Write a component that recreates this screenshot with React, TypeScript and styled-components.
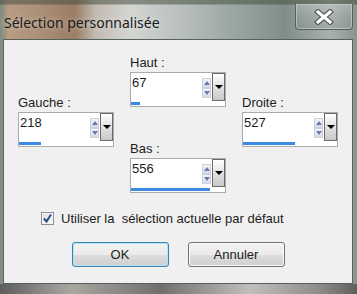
import React from 'react'
import styled, { createGlobalStyle } from 'styled-components'

const GlobalStyle = createGlobalStyle`
	html, body {
		margin: 0;
		padding: 0;
		width: 357px;
		height: 294px;
		overflow: hidden;
	}
	body {
		font-family: "Liberation Sans", Arial, sans-serif;
	}
`

type Field = {
	label: string
	value: number
	bar: number
}

const fields: Record<string, Field> = {
	gauche: { label: 'Gauche :', value: 218, bar: 22 },
	haut: { label: 'Haut :', value: 67, bar: 9 },
	droite: { label: 'Droite :', value: 527, bar: 52 },
	bas: { label: 'Bas :', value: 556, bar: 79 },
}

const SpinField = ({ field, offset }: { field: Field; offset?: boolean }) => (
	<FieldGroup $offset={offset}>
		<FieldLabel>{field.label}</FieldLabel>
		<SpinBox>
			<SpinValue>{field.value}</SpinValue>
			<Spinner>
				<SpinArrow $dir="up" />
				<SpinArrow $dir="down" />
			</Spinner>
			<DropButton>
				<DropTriangle />
			</DropButton>
			<BarTrack>
				<Bar style={{ width: field.bar }} />
			</BarTrack>
		</SpinBox>
	</FieldGroup>
)

const App = () => {
	return (
		<>
			<GlobalStyle />
			<Window>
				<TitleBar>
					<Title>Sélection personnalisée</Title>
					<CloseButton>
						<svg width="20" height="16" viewBox="0 0 20 16">
							<path d="M4 3 L16 13 M16 3 L4 13" stroke="#4b5552" strokeWidth="5.5" strokeLinecap="square" fill="none" />
							<path d="M4 3 L16 13 M16 3 L4 13" stroke="#ffffff" strokeWidth="3.2" strokeLinecap="square" fill="none" />
						</svg>
					</CloseButton>
				</TitleBar>
				<Client>
					<FieldsGrid>
						<SpinField field={fields.gauche} offset />
						<MiddleColumn>
							<SpinField field={fields.haut} />
							<SpinField field={fields.bas} />
						</MiddleColumn>
						<SpinField field={fields.droite} offset />
					</FieldsGrid>
					<CheckRow>
						<CheckBox>
							<svg width="11" height="11" viewBox="0 0 11 11">
								<path d="M2 5.5 L4.5 8.5 L9 1.5" stroke="#2a4b8d" strokeWidth="2" fill="none" />
							</svg>
						</CheckBox>
						<CheckLabel>Utiliser la  sélection actuelle par défaut</CheckLabel>
					</CheckRow>
					<ButtonRow>
						<DialogButton $primary>OK</DialogButton>
						<DialogButton>Annuler</DialogButton>
					</ButtonRow>
				</Client>
			</Window>
		</>
	)
}

const Window = styled.div`
	width: 357px;
	height: 294px;
	box-sizing: border-box;
	display: flex;
	flex-direction: column;
	padding: 0 4px 0 3px;
	background:
		linear-gradient(to bottom, rgba(70, 80, 65, 0.55) 0, rgba(70, 80, 65, 0.55) 4px, transparent 5px),
		linear-gradient(to right, #5e5e5e 0, #a7a7a2 20%, #6f706c 45%, #bfbfbb 70%, #8a8a86 90%, #5f5f5c 100%) bottom / 100% 10px no-repeat,
		linear-gradient(to right, #7d8d80 0, #8e9080 3px, #b79c82 8px, #ab8f77 40px, #9a7c63 75px, #c2bab0 95px, #d4d6d2 130px, #bcc2bf 175px, #9ca8a4 230px, #808e8a 285px, #a8b1ac 330px, #8a948e 357px);
`

const TitleBar = styled.div`
	height: 39px;
	display: flex;
	justify-content: space-between;
	align-items: flex-start;
`

const Title = styled.div`
	font-family: "Noto Sans", "Open Sans", sans-serif;
	font-size: 14px;
	line-height: 20px;
	color: #1a1a1a;
	padding: 13px 0 0 1px;
	text-shadow: 0 0 6px rgba(255, 255, 255, 0.5);
`

const CloseButton = styled.div`
	margin-top: 4px;
	width: 58px;
	height: 26px;
	box-sizing: border-box;
	display: flex;
	align-items: center;
	justify-content: center;
	border: 1px solid #56605b;
	border-top: none;
	border-radius: 0 0 4px 4px;
	box-shadow: inset 0 0 0 1px rgba(255, 255, 255, 0.35);
	background: linear-gradient(to bottom, rgba(255, 255, 255, 0.2), rgba(255, 255, 255, 0.05) 50%, rgba(0, 0, 0, 0.04));
`

const Client = styled.div`
	height: 245px;
	box-sizing: border-box;
	background: #f0f0f0;
	border: 1px solid #55615f;
	padding: 15px 0 0 14px;
	display: flex;
	flex-direction: column;
	color: #1c1c1c;
`

const FieldsGrid = styled.div`
	display: grid;
	grid-template-columns: 96px 96px 96px;
	column-gap: 16px;
	align-items: start;
`

const MiddleColumn = styled.div`
	display: flex;
	flex-direction: column;
	gap: 34px;
`

const FieldGroup = styled.div<{ $offset?: boolean }>`
	display: flex;
	flex-direction: column;
	gap: 2px;
	margin-top: ${p => (p.$offset ? '40px' : '0')};
`

const FieldLabel = styled.div`
	font-size: 13px;
	line-height: 15px;
`

const SpinBox = styled.div`
	width: 96px;
	height: 35px;
	box-sizing: border-box;
	border: 1px solid #a9abae;
	background: #fff;
	display: grid;
	grid-template-columns: 71px 10px 13px;
	grid-template-rows: 28px 5px;
`

const SpinValue = styled.div`
	font-size: 13px;
	line-height: 15px;
	padding: 2px 0 0 1px;
`

const Spinner = styled.div`
	display: flex;
	flex-direction: column;
	padding-top: 5px;
`

const SpinArrow = styled.div<{ $dir: 'up' | 'down' }>`
	width: 9px;
	height: 10px;
	box-sizing: border-box;
	border: 1px solid #cfd2dc;
	background: linear-gradient(to bottom, #f3f4f9, #d9dce8);
	display: flex;
	align-items: center;
	justify-content: center;
	&::after {
		content: '';
		border-left: 3px solid transparent;
		border-right: 3px solid transparent;
		${p => (p.$dir === 'up' ? 'border-bottom: 4px solid #6d7aa8;' : 'border-top: 4px solid #6d7aa8;')}
	}
`

const DropButton = styled.div`
	box-sizing: border-box;
	border: 1px solid #6a6a6a;
	background: linear-gradient(to bottom, #ffffff, #e4e4e4 45%, #c9c9c9);
	display: flex;
	align-items: center;
	justify-content: center;
`

const DropTriangle = styled.div`
	border-left: 4px solid transparent;
	border-right: 4px solid transparent;
	border-top: 4px solid #000;
	margin-top: -1px;
`

const BarTrack = styled.div`
	grid-column: 1 / -1;
	padding-top: 1px;
`

const Bar = styled.div`
	height: 3px;
	background: #3a8ae2;
`

const CheckRow = styled.div`
	display: flex;
	align-items: center;
	gap: 7px;
	margin: 18px 0 0 23px;
`

const CheckBox = styled.div`
	width: 13px;
	height: 13px;
	box-sizing: border-box;
	border: 1px solid #8e8f8f;
	background: linear-gradient(to bottom right, #dcdcdc, #fbfbfb);
	box-shadow: inset 0 0 0 1px #f4f4f4;
	display: flex;
	align-items: center;
	justify-content: center;
`

const CheckLabel = styled.span`
	font-size: 13px;
	line-height: 15px;
	white-space: pre;
`

const ButtonRow = styled.div`
	display: flex;
	justify-content: center;
	gap: 19px;
	margin: 16px 0 0 -14px;
`

const DialogButton = styled.div<{ $primary?: boolean }>`
	width: 97px;
	height: 25px;
	box-sizing: border-box;
	border: 1px solid ${p => (p.$primary ? '#3c7fb1' : '#707070')};
	border-radius: 3px;
	background: linear-gradient(to bottom, #f2f2f2 0%, #ebebeb 50%, #dddddd 51%, #cfcfcf 100%);
	box-shadow: inset 0 0 0 1px ${p => (p.$primary ? '#b5e4f7' : '#fcfcfc')};
	display: flex;
	align-items: center;
	justify-content: center;
	font-size: 13px;
`

export default App
